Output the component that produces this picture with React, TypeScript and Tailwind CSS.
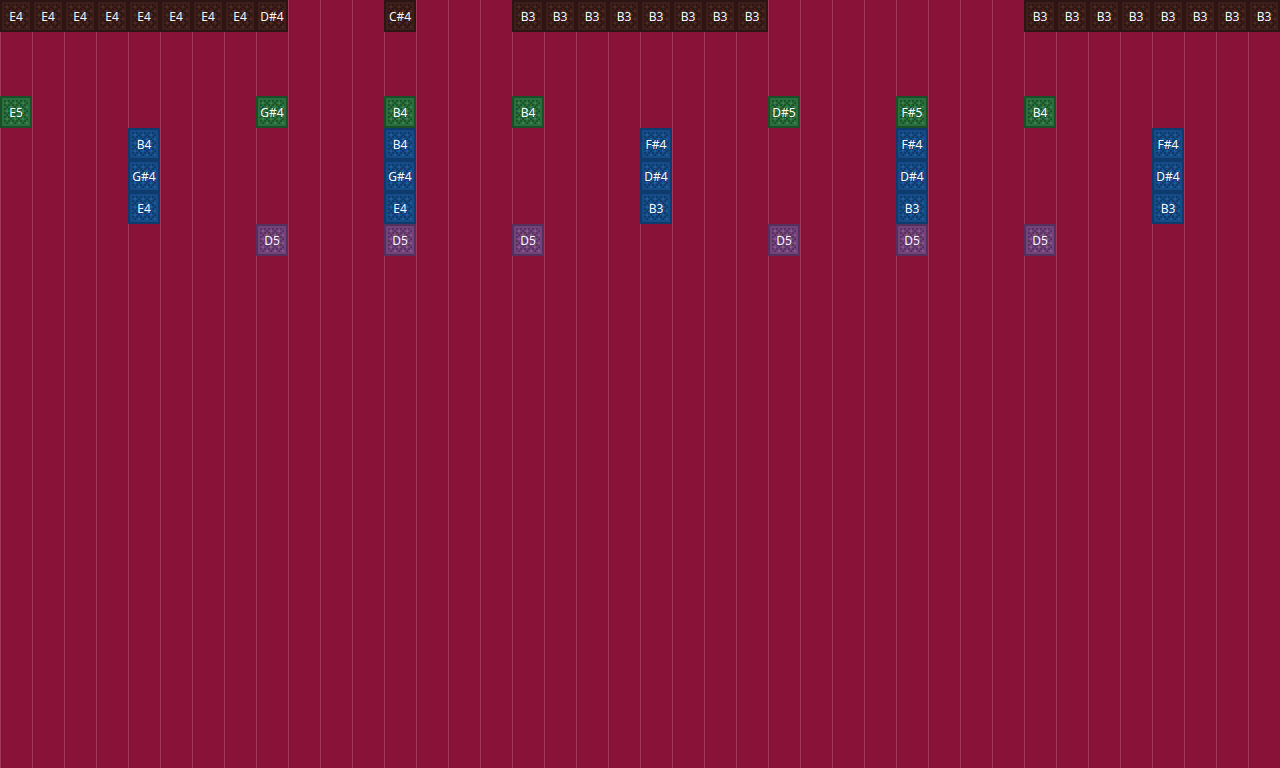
import React from "react";

const COLS = 40;

// 16x16 note block texture, each cell is 2px on screen
// 0 = frame, 1 = base, 2 = shadow, 3 = light
const TEXTURE = [
  "0000000000000000",
  "0111111111111110",
  "0121212121212110",
  "0113121312131210",
  "0121212121212110",
  "0112131213121310",
  "0121212121212110",
  "0113121312131210",
  "0121212121212110",
  "0112131213121310",
  "0121212121212110",
  "0113121312131210",
  "0121212121212110",
  "0112131213121310",
  "0111111111111110",
  "0000000000000000",
];

const kinds: Record<string, string[]> = {
  brown: ["#2c1512", "#3e1e1a", "#2d1512", "#4d2a25"],
  green: ["#1a4f28", "#2a6e3d", "#1b5429", "#3a8050"],
  blue: ["#0e3b6c", "#154c87", "#0e3a6c", "#1f5c9c"],
  purple: ["#55305f", "#71437a", "#5a3364", "#875a8c"],
};

const rows: { kind: string; notes: Record<number, string> }[] = [
  {
    kind: "brown",
    notes: {
      0: "E4", 1: "E4", 2: "E4", 3: "E4", 4: "E4", 5: "E4", 6: "E4", 7: "E4", 8: "D#4", 12: "C#4",
      16: "B3", 17: "B3", 18: "B3", 19: "B3", 20: "B3", 21: "B3", 22: "B3", 23: "B3",
      32: "B3", 33: "B3", 34: "B3", 35: "B3", 36: "B3", 37: "B3", 38: "B3", 39: "B3",
    },
  },
  { kind: "brown", notes: {} },
  { kind: "brown", notes: {} },
  { kind: "green", notes: { 0: "E5", 8: "G#4", 12: "B4", 16: "B4", 24: "D#5", 28: "F#5", 32: "B4" } },
  { kind: "blue", notes: { 4: "B4", 12: "B4", 20: "F#4", 28: "F#4", 36: "F#4" } },
  { kind: "blue", notes: { 4: "G#4", 12: "G#4", 20: "D#4", 28: "D#4", 36: "D#4" } },
  { kind: "blue", notes: { 4: "E4", 12: "E4", 20: "B3", 28: "B3", 36: "B3" } },
  { kind: "purple", notes: { 8: "D5", 12: "D5", 16: "D5", 24: "D5", 28: "D5", 32: "D5" } },
];

const Texture = ({ colors }: { colors: string[] }) => (
  <svg className="block h-8 w-8" viewBox="0 0 16 16" shapeRendering="crispEdges">
    {TEXTURE.map((line, y) =>
      line.split("").map((c, x) => <rect key={`${x}-${y}`} x={x} y={y} width="1" height="1" fill={colors[Number(c)]} />)
    )}
  </svg>
);

const Note = ({ label, kind }: { label: string; kind: string }) => (
  <div className="relative h-8 w-8">
    <Texture colors={kinds[kind]} />
    <span className="absolute inset-0 flex items-center justify-center pt-px text-xs leading-none font-medium text-white">
      {label}
    </span>
  </div>
);

const App = () => {
  return (
    <div className="relative h-[768px] w-[1280px] overflow-hidden bg-[#891237] bg-[repeating-conic-gradient(#8b1237_0_25%,#871237_0_50%)] bg-[length:4px_4px] font-['Open_Sans',sans-serif]">
      <div className="absolute inset-0 flex">
        {Array.from({ length: COLS }).map((_, i) => (
          <div key={i} className="h-full w-8 shrink-0 border-l border-[#9c3a58]" />
        ))}
      </div>
      <div className="relative flex flex-col">
        {rows.map((row, r) => (
          <div key={r} className="flex h-8">
            {Array.from({ length: COLS }).map((_, c) => (
              <div key={c} className="h-8 w-8 shrink-0">
                {row.notes[c] && <Note label={row.notes[c]} kind={row.kind} />}
              </div>
            ))}
          </div>
        ))}
      </div>
    </div>
  );
};

export default App;
